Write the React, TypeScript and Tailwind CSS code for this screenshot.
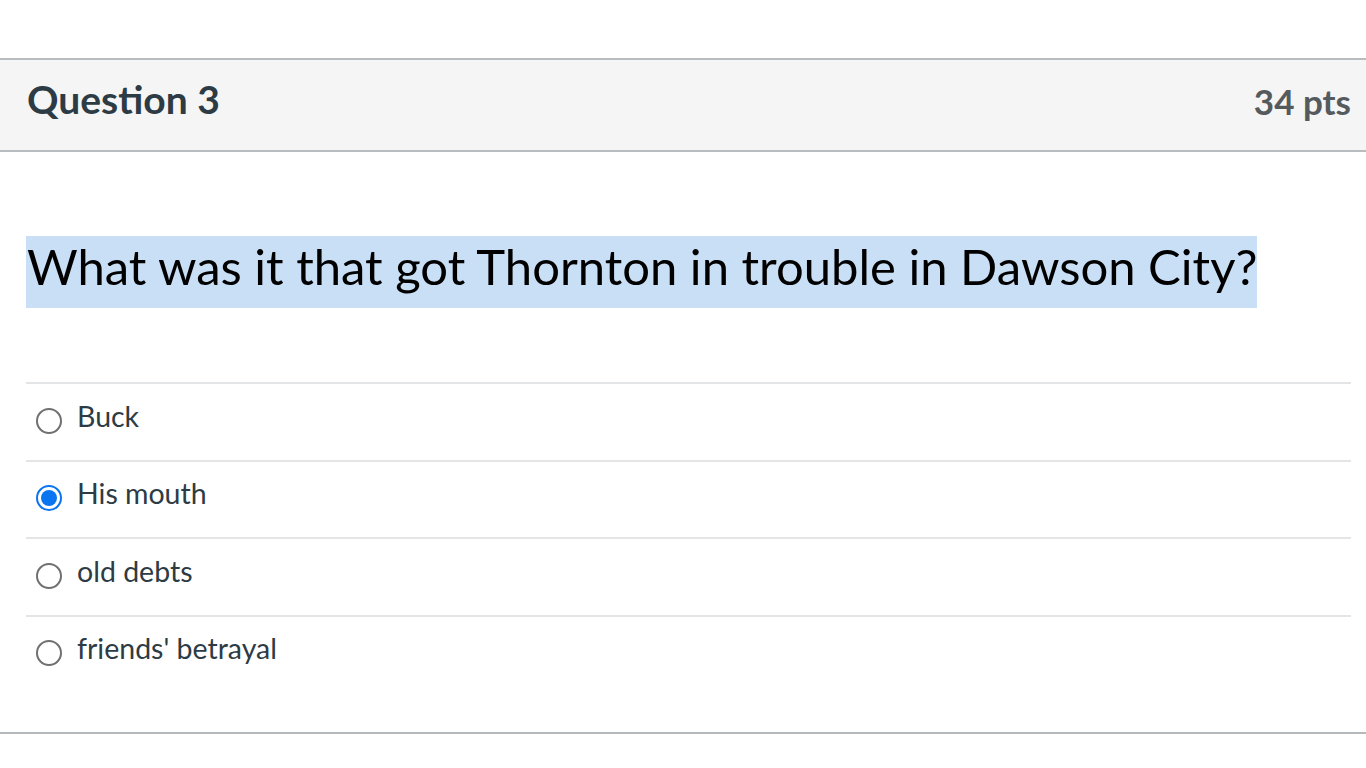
import React from "react";

const answers = [
  { label: "Buck", checked: false },
  { label: "His mouth", checked: true },
  { label: "old debts", checked: false },
  { label: "friends' betrayal", checked: false },
];

function Radio({ checked }: { checked: boolean }) {
  if (checked) {
    return (
      <span className="flex h-[26px] w-[26px] shrink-0 items-center justify-center rounded-full border-[2px] border-[#0b74f0] bg-white">
        <span className="block h-[16px] w-[16px] rounded-full bg-[#0b74f0]" />
      </span>
    );
  }
  return <span className="block h-[26px] w-[26px] shrink-0 rounded-full border-[2px] border-[#707070] bg-white" />;
}

export default function App() {
  return (
    <div className="min-h-[768px] bg-white pt-[58px]" style={{ fontFamily: "Lato, 'Open Sans', sans-serif" }}>
      <div className="border-b-2 border-[#b5b9bc]">
        <div className="flex h-[94px] items-center justify-between border-y-2 border-[#b8bcbf] bg-[#f5f5f5] pl-[27px] pr-[15px]">
          <h2 className="pb-[12px] text-[39px] font-bold leading-none text-[#2d3b45]">Question 3</h2>
          <span className="pb-[8px] text-[35px] font-bold leading-none text-[#555a5d]">34 pts</span>
        </div>
        <div className="pl-[26px] pr-[15px] pt-[84px] pb-[40px]">
          <p className="inline-block bg-[#c9dff6] pb-[12px] pl-[1px] text-[49px] leading-[60px] text-black">
            What was it that got Thornton in trouble in Dawson City?
          </p>
          <div className="mt-[74px]">
            {answers.map((a) => (
              <div key={a.label} className="flex h-[77.5px] items-center gap-[15px] border-t-2 border-[#e3e5e7] pl-[10px] pb-[2px]">
                <span className="block"><Radio checked={a.checked} /></span>
                <span className="pb-[10px] text-[28.5px] leading-none text-[#2d3b45]">{a.label}</span>
              </div>
            ))}
          </div>
        </div>
      </div>
    </div>
  );
}
